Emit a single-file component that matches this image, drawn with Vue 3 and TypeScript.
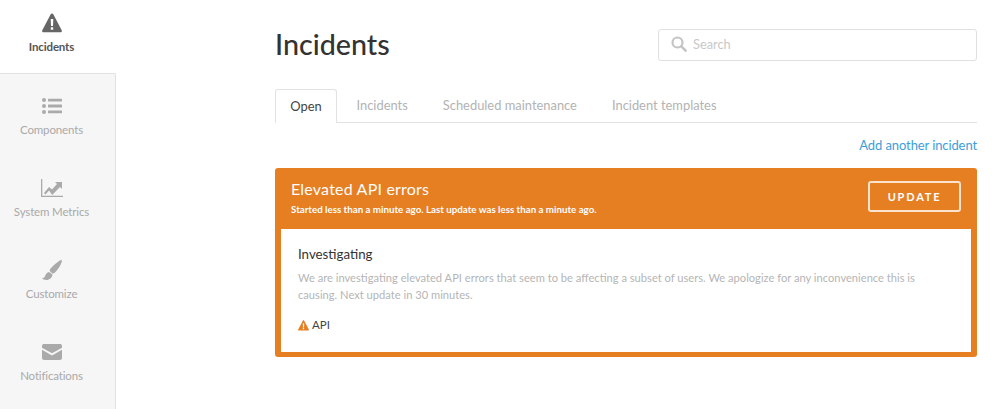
<script setup lang="ts">
const tabs: string[] = ['Incidents', 'Scheduled maintenance', 'Incident templates']
</script>

<template>
  <div class="page">
    <nav class="side">
      <a class="item active">
        <svg class="ico" width="20" height="19" viewBox="0 0 20 19"><path fill="#666" fill-rule="evenodd" d="M10 0c.6 0 1 .3 1.300.8l8.400 15.900c.5 1-.1 2.100-1.200 2.100H1.500C.4 18.800-.2 17.700.3 16.700L8.700.8C9 .3 9.400 0 10 0zM8.700 5.500l.3 7h2l.3-7zM8.800 13.800v2.500h2.400v-2.500z"/></svg>
        <span>Incidents</span>
      </a>
      <div class="rest">
        <a class="item">
          <svg class="ico" width="20" height="16" viewBox="0 0 20 16"><g fill="#aaa"><circle cx="2" cy="2" r="2"/><circle cx="2" cy="8" r="2"/><circle cx="2" cy="14" r="2"/><rect x="6" y=".7" width="14" height="2.800" rx=".5"/><rect x="6" y="6.600" width="14" height="2.800" rx=".5"/><rect x="6" y="12.500" width="14" height="2.800" rx=".5"/></g></svg>
          <span>Components</span>
        </a>
        <a class="item">
          <svg class="ico" width="22" height="18" viewBox="0 0 22 18"><path fill="#aaa" d="M0 0h1.300v16.700H22V18H0z"/><path fill="#aaa" d="M3 14l5-6 3 2.500 5-5.500-2-2h7v7l-2-2-7.800 8L8 11.500 4.500 15.500z"/></svg>
          <span>System Metrics</span>
        </a>
        <a class="item">
          <svg class="ico" width="20" height="20" viewBox="0 0 20 20"><path fill="#aaa" d="M19.200 0c.8 0 .9 1 .5 2-1.200 3.500-3.600 7.500-6.700 10.500-.8.8-1.800 1.200-2.800 1L7.800 11c-.2-1 .2-2 1-2.800C11.500 5.500 15.500 2 17.800.6c.5-.4 1-.6 1.400-.6z"/><path fill="#aaa" d="M7 12l3.500 2.500c-.2 3-3 5.500-6 5.500-2 0-4-.7-4.500-2 1.500.2 2.500-.5 3-1.800C3.700 14 5 12.300 7 12z"/></svg>
          <span>Customize</span>
        </a>
        <a class="item">
          <svg class="ico" width="20" height="16" viewBox="0 0 20 16"><path fill="#aaa" d="M2 0h16c1 0 2 .7 2 1.700v2L10 9.300 0 3.700v-2C0 .7 1 0 2 0z"/><path fill="#aaa" d="M0 5.800l10 5.600 10-5.600V14c0 1.100-.9 2-2 2H2c-1.100 0-2-.9-2-2z"/></svg>
          <span>Notifications</span>
        </a>
      </div>
    </nav>

    <main class="main">
      <header class="head">
        <h1>Incidents</h1>
        <label class="search">
          <svg width="16" height="16" viewBox="0 0 16 16"><circle cx="6.500" cy="6.500" r="5" fill="none" stroke="#c4c4c4" stroke-width="2.200"/><path d="M10.300 10.300l4.300 4.300" stroke="#c4c4c4" stroke-width="2.600" stroke-linecap="round"/></svg>
          <span>Search</span>
        </label>
      </header>

      <div class="tabs">
        <a class="tab on">Open</a>
        <a v-for="t in tabs" :key="t" class="tab">{{ t }}</a>
      </div>

      <div class="add"><a>Add another incident</a></div>

      <section class="card">
        <div class="card-head">
          <div>
            <h2>Elevated API errors</h2>
            <p>Started less than a minute ago. Last update was less than a minute ago.</p>
          </div>
          <button class="update">UPDATE</button>
        </div>
        <div class="card-body">
          <h3>Investigating</h3>
          <p>We are investigating elevated API errors that seem to be affecting a subset of users. We apologize for any inconvenience this is causing. Next update in 30 minutes.</p>
          <div class="comp">
            <svg width="11" height="11" viewBox="0 0 20 19"><path fill="#e67e22" fill-rule="evenodd" d="M10 0c.6 0 1 .3 1.300.8l8.400 15.900c.5 1-.1 2.100-1.200 2.100H1.500C.4 18.800-.2 17.700.3 16.700L8.700.8C9 .3 9.400 0 10 0zM8.700 5.500l.3 7h2l.3-7zM8.800 13.800v2.500h2.400v-2.500z"/></svg>
            <span>API</span>
          </div>
        </div>
      </section>
    </main>
  </div>
</template>

<style>
html, body { margin: 0; background: #fff; }
</style>

<style scoped>
.page {
  display: flex;
  width: 998px;
  height: 409px;
  overflow: hidden;
  font-family: Lato, "Open Sans", sans-serif;
}
.side {
  width: 116px;
  flex: none;
  display: flex;
  flex-direction: column;
}
.item {
  display: flex;
  flex-direction: column;
  align-items: center;
  width: 103px;
  height: 82px;
  font-size: 11.500px;
  letter-spacing: -.15px;
  color: #a9a9a9;
}
.item .ico { height: 20px; margin-top: 22px; }
.item span { margin-top: 6px; line-height: 16px; }
.item.active {
  height: 73px;
  color: #555;
  font-weight: 700;
}
.item.active .ico { margin-top: 13px; }
.item.active span { margin-top: 6px; }
.rest {
  flex: 1;
  background: #f6f6f6;
  border-top: 1px solid #e2e2e2;
  border-right: 1px solid #e2e2e2;
  border-top-right-radius: 2px;
}
.main {
  margin-left: 159px;
  width: 702px;
  flex: none;
}
.head {
  display: flex;
  justify-content: space-between;
  align-items: flex-start;
  height: 89px;
}
h1 {
  margin: 26px 0 0;
  font-size: 28.700px;
  line-height: 36px;
  font-weight: 500;
  color: #333;
}
.search {
  box-sizing: border-box;
  margin-top: 29px;
  width: 319px;
  height: 32px;
  border: 1px solid #e0e0e0;
  border-radius: 3px;
  display: flex;
  align-items: center;
  gap: 6px;
  padding: 0 0 2px 12px;
  font-size: 12.800px;
  color: #c8c8c8;
}
.tabs {
  display: flex;
  height: 34px;
  box-sizing: border-box;
  border-bottom: 1px solid #e2e2e2;
}
.tab {
  padding: 0 17.500px;
  font-size: 12.900px;
  line-height: 33px;
  color: #b3b3b3;
}
.tab.on {
  box-sizing: border-box;
  width: 62px;
  height: 34px;
  padding: 0;
  margin-right: 2px;
  text-align: center;
  color: #444;
  background: #fff;
  border: 1px solid #e2e2e2;
  border-bottom: 0;
  border-radius: 3px 3px 0 0;
}
.add {
  text-align: right;
  height: 45px;
  padding-top: 13px;
  box-sizing: border-box;
  font-size: 13px;
  line-height: 18px;
  color: #3d9ed9;
  letter-spacing: -.1px;
}
.card {
  background: #e67e22;
  border-radius: 3px;
  padding: 0 6px 5px;
}
.card-head {
  height: 61px;
  display: flex;
  justify-content: space-between;
  align-items: flex-start;
  color: #fff;
  padding: 0 10px;
}
h2 {
  margin: 11px 0 0;
  font-size: 16px;
  line-height: 20px;
  font-weight: 400;
  letter-spacing: .2px;
}
.card-head p {
  margin: 3px 0 0;
  font-size: 9.750px;
  line-height: 14px;
  font-weight: 700;
}
.update {
  box-sizing: border-box;
  margin-top: 13px;
  width: 93px;
  height: 31px;
  background: transparent;
  border: 2px solid #fbe3cd;
  border-radius: 3px;
  color: #fff;
  font: 700 11px Lato, sans-serif;
  letter-spacing: 1.800px;
}
.card-body {
  box-sizing: border-box;
  height: 123px;
  background: #fff;
  padding: 16px 17px 0;
}
h3 {
  margin: 0;
  font-size: 13.300px;
  line-height: 18px;
  font-weight: 400;
  color: #333;
}
.card-body p {
  margin: 6px 0 0;
  font-size: 11.150px;
  line-height: 17px;
  color: #b5b5b5;
}
.comp {
  margin-top: 14px;
  display: flex;
  align-items: center;
  gap: 3px;
  font-size: 11.500px;
  line-height: 16px;
  color: #444;
}
</style>
